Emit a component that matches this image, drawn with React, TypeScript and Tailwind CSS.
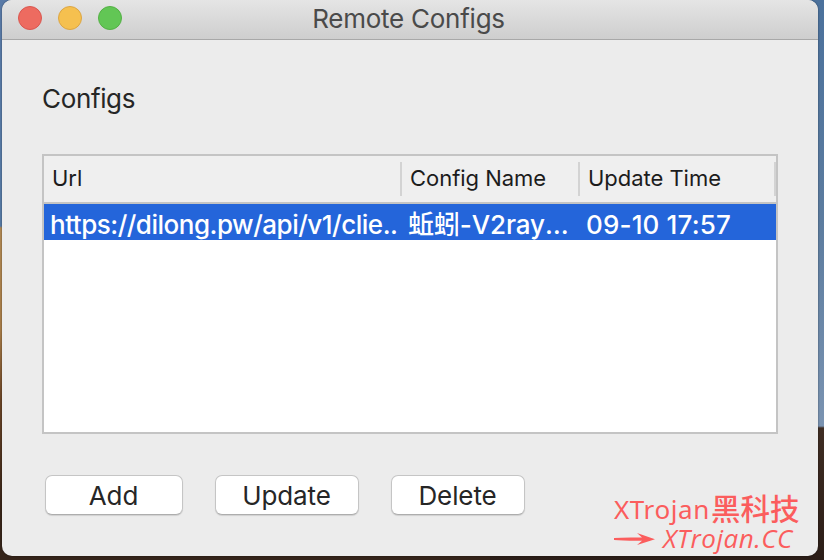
import { clsx } from 'clsx'

const columns = [
  { title: 'Url', width: 'w-[358px]' },
  { title: 'Config Name', width: 'w-[178px]' },
  { title: 'Update Time', width: 'w-[196px]' }
]

const configs = [
  { url: 'https://dilong.pw/api/v1/clie..', name: '蚯蚓-V2ray', updated: '09-10 17:57' }
]

const actions = [
  { label: 'Add', width: 'w-[138px]' },
  { label: 'Update', width: 'w-[144px]' },
  { label: 'Delete', width: 'w-[134px]' }
]

function TitleBar() {
  return (
    <header className="relative flex h-10 shrink-0 items-center gap-4 border-b border-[#a8a8a8] bg-linear-to-b from-[#e5e5e5] to-[#cecece] px-4 pb-[3px]">
      <span className="size-6 rounded-full border border-[#d95750] bg-[#ed6b60]" />
      <span className="size-6 rounded-full border border-[#dba544] bg-[#f5c04f]" />
      <span className="size-6 rounded-full border border-[#54b045] bg-[#62c655]" />
      <h1 className="absolute inset-x-0 top-0 pr-[3px] text-center text-[26px] leading-[38px] tracking-[-0.25px] text-[#4a4a4a]">
        Remote Configs
      </h1>
    </header>
  )
}

function ConfigTable() {
  return (
    <div className="h-[280px] w-[736px] border-2 border-[#c4c4c4] bg-white">
      <div className="flex h-12 items-center border-b-2 border-[#c4c4c4] bg-[#efefef]">
        {columns.map(column => (
          <div
            key={column.title}
            className={clsx(
              'h-[34px] shrink-0 border-r-2 border-[#d3d3d3] pl-2 text-[22px] leading-[32px] tracking-[-0.03px] whitespace-nowrap text-[#1c1c1c]',
              column.width
            )}
          >
            {column.title}
          </div>
        ))}
      </div>
      {configs.map(config => (
        <div
          key={config.url}
          className="flex h-9 bg-[#2465da] text-[26px] leading-[42px] font-medium whitespace-nowrap text-white"
        >
          <div className="w-[358px] shrink-0 pl-1.5 tracking-[-0.49px]">{config.url}</div>
          <div className="w-[178px] shrink-0 pl-1.5">
            <span className="tracking-[-0.1px]">{config.name}</span>
            <span className="tracking-[1px]">…</span>
          </div>
          <div className="w-[196px] shrink-0 pl-1.5 tracking-[0.15px]">{config.updated}</div>
        </div>
      ))}
    </div>
  )
}

function Watermark() {
  return (
    <div className="flex w-[190px] flex-col whitespace-nowrap text-[#fb5d5d]">
      <p className="flex h-[30px] items-center pl-px font-['Noto_Sans','Noto_Sans_CJK_SC',sans-serif] text-[26px] leading-[30px]">
        <span className="w-[97px] tracking-[0.6px]">XTrojan</span>
        <span className="text-[29.5px] font-medium">黑科技</span>
      </p>
      <p className="flex h-[29px] items-center font-['Open_Sans',sans-serif] text-[26px] leading-[29px] font-medium tracking-[0.5px] italic">
        <svg width="42" height="14" viewBox="0 0 42 14" fill="currentColor" className="mr-[7px] ml-px shrink-0">
          <path d="M0 6Q10 5.2 28 5.6L23 1L41 7.3L23 13L28 8.8Q10 9 0 8z" />
        </svg>
        XTrojan.CC
      </p>
    </div>
  )
}

export default function App() {
  return (
    <div className="h-[560px] w-[824px] overflow-hidden bg-[linear-gradient(to_bottom,#5a7ba8_0,#577ba6_226px,#b28a55_228px,#a87d48_330px,#6b4527_400px,#3a2618_500px,#35241a_560px)] font-['Inter','Noto_Sans_CJK_SC',sans-serif]">
      <div className="flex h-full justify-end">
        <div className="h-full w-[334px] bg-[linear-gradient(to_bottom,#4b719c_0,#5c7c9f_220px,#7a93b1_426px,#3f2d23_428px,#2b1d17_560px)]" />
      </div>
      <div className="relative -mt-[560px] ml-0.5 flex h-[556px] w-[816px] flex-col overflow-hidden rounded-[10px] bg-[#ececec] shadow-[0_0_2px_rgba(0,0,0,0.5)]">
        <TitleBar />
        <main className="flex flex-1 flex-col pt-[42px] pl-10">
          <h2 className="mb-[38px] text-[26px] leading-[34px] tracking-[-0.35px] text-[#262626]">
            Configs
          </h2>
          <ConfigTable />
          <div className="flex items-start pt-[41px] pl-[3px]">
            <div className="flex gap-8">
              {actions.map(action => (
                <button
                  key={action.label}
                  className={clsx(
                    'h-10 rounded-[7px] border border-[#c5c5c5] border-b-[#adadad] bg-white pt-0.5 pr-px text-[26px] leading-[36px] tracking-[-0.1px] text-[#262626] shadow-[0_1px_1px_rgba(0,0,0,0.12)]',
                    action.width
                  )}
                >
                  {action.label}
                </button>
              ))}
            </div>
            <div className="mt-[19px] ml-[88px]">
              <Watermark />
            </div>
          </div>
        </main>
      </div>
    </div>
  )
}
